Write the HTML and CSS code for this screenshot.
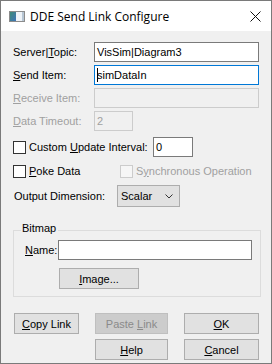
FILE: index.html
```html
<!DOCTYPE html>
<html lang="en">
<head>
  <meta charset="UTF-8">
  <title>DDE Send Link Configure</title>
  <link rel="stylesheet" href="styles.css">
</head>
<body>
  <div class="window">
    <div class="titlebar">
      <svg class="app-icon" width="16" height="11" viewBox="0 0 16 11">
        <defs>
          <linearGradient id="blk" x1="0" y1="0" x2="1" y2="1">
            <stop offset="0" stop-color="#3c8a78"/>
            <stop offset="1" stop-color="#3f74b8"/>
          </linearGradient>
        </defs>
        <rect x="0.5" y="0.5" width="15" height="10" fill="#d7dee4" stroke="#8c8c8c"/>
        <rect x="1" y="1" width="6" height="9" fill="url(#blk)"/>
        <rect x="7" y="1" width="6" height="9" fill="#eef3f8"/>
        <rect x="13" y="1" width="2" height="9" fill="#b7c6d4"/>
      </svg>
      <span class="title">DDE Send Link Configure</span>
      <svg class="close" width="11" height="11" viewBox="0 0 11 11">
        <path d="M0.5 0.5 L10.5 10.5 M10.5 0.5 L0.5 10.5" stroke="#111" stroke-width="1"/>
      </svg>
    </div>

    <div class="client">
      <div class="fields">
        <span class="lbl">Server|<u>T</u>opic:</span>
        <div class="edit">VisSim|Diagram3</div>

        <span class="lbl"><u>S</u>end Item:</span>
        <div class="edit focused"><span class="caret"></span>simDataIn</div>

        <span class="lbl off"><u>R</u>eceive Item:</span>
        <div class="edit disabled"></div>

        <span class="lbl off"><u>D</u>ata Timeout:</span>
        <div class="edit disabled short">2</div>
      </div>

      <div class="row row-update">
        <span class="check wide-check"><span class="box"></span><span>Custom <u>U</u>pdate Interval:</span></span>
        <div class="edit small">0</div>
      </div>

      <div class="row row-poke">
        <span class="check poke-check"><span class="box"></span><span><u>P</u>oke Data</span></span>
        <span class="check off"><span class="box"></span><span>S<u>y</u>nchronous Operation</span></span>
      </div>

      <div class="row row-output">
        <span class="out-lbl">Output Dimension:</span>
        <div class="combo">
          <span>Scalar</span>
          <svg width="8" height="5" viewBox="0 0 8 5"><path d="M0.5 0.5 L4 4 L7.5 0.5" fill="none" stroke="#333" stroke-width="1"/></svg>
        </div>
      </div>

      <fieldset class="group">
        <legend>Bitmap</legend>
        <div class="name-row">
          <span class="name-lbl"><u>N</u>ame:</span>
          <div class="edit name-edit"></div>
        </div>
        <div class="btn image-btn"><span><u>I</u>mage...</span></div>
      </fieldset>

      <div class="buttons">
        <div class="btn"><span><u>C</u>opy Link</span></div>
        <div class="btn disabled"><span>Paste <u>L</u>ink</span></div>
        <div class="btn"><span><u>O</u>K</span></div>
        <div></div>
        <div class="btn"><span><u>H</u>elp</span></div>
        <div class="btn"><span><u>C</u>ancel</span></div>
      </div>
    </div>
  </div>
</body>
</html>
```

FILE: styles.css
```css
body, html {
  margin: 0;
  padding: 0;
}
body {
  font-family: 'Liberation Sans', Arial, sans-serif;
  font-size: 11px;
  color: #000;
}
u {
  text-decoration-thickness: 1px;
  text-underline-offset: 1px;
}
.window {
  width: 272px;
  height: 364px;
  box-sizing: border-box;
  border: 1px solid #7a7a7a;
  background: #f0f0f0;
}
.titlebar {
  height: 30px;
  background: #fff;
  display: flex;
  align-items: center;
}
.app-icon {
  margin-left: 8px;
  margin-top: 1px;
}
.title {
  font-family: 'Open Sans', sans-serif;
  font-size: 12px;
  margin-left: 5px;
  flex: 1;
}
.close {
  margin-right: 10px;
}
.client {
  padding: 11px 0 0 12px;
}
.fields {
  display: grid;
  grid-template-columns: 81px 165px;
  grid-auto-rows: 20px;
  row-gap: 3px;
  align-items: center;
}
.lbl.off, .check.off {
  color: #a0a0a0;
}
.edit {
  height: 20px;
  box-sizing: border-box;
  border: 1px solid #7a7a7a;
  background: #fff;
  padding: 0 2px;
  line-height: 18px;
  white-space: nowrap;
  position: relative;
}
.edit.focused {
  border-color: #0078d7;
}
.edit.disabled {
  border-color: #cccccc;
  background: #f0f0f0;
  color: #a0a0a0;
}
.edit.short {
  width: 39px;
}
.caret {
  position: absolute;
  left: 2px;
  top: 2px;
  width: 1px;
  height: 14px;
  background: #000;
}
.row {
  display: flex;
  align-items: center;
  height: 20px;
}
.row-update {
  margin-top: 6px;
}
.row-poke {
  margin-top: 4px;
}
.row-output {
  margin-top: 4px;
  height: 22px;
}
.check {
  display: flex;
  align-items: center;
}
.check .box {
  width: 13px;
  height: 13px;
  box-sizing: border-box;
  border: 1px solid #333;
  background: #fff;
  margin-right: 3px;
}
.check.off .box {
  border-color: #cccccc;
  background: #f6f6f6;
}
.wide-check {
  width: 140px;
}
.poke-check {
  width: 107px;
}
.edit.small {
  width: 40px;
}
.out-lbl {
  width: 103px;
  padding-left: 1px;
}
.combo {
  width: 63px;
  height: 22px;
  box-sizing: border-box;
  border: 1px solid #adadad;
  background: #e1e1e1;
  display: flex;
  align-items: center;
  justify-content: space-between;
  padding: 0 6px 0 3px;
}
.group {
  width: 248px;
  box-sizing: border-box;
  margin: 15px 0 0 0;
  padding: 0 0 7px 11px;
  border: 1px solid #dcdcdc;
}
.group legend {
  padding: 0 2px 4px 1px;
  margin-left: -4px;
  line-height: 13px;
}
.name-row {
  display: flex;
  align-items: center;
  margin-top: 1px;
}
.name-lbl {
  width: 33px;
}
.name-edit {
  width: 194px;
}
.btn {
  height: 21px;
  box-sizing: border-box;
  border: 1px solid #adadad;
  background: #e1e1e1;
  display: flex;
  align-items: center;
  justify-content: center;
}
.btn.disabled {
  background: #cccccc;
  border-color: #bfbfbf;
  color: #8a8a8a;
}
.image-btn {
  width: 80px;
  margin: 8px 0 0 34px;
}
.buttons {
  display: grid;
  grid-template-columns: 65px 73px 75px;
  column-gap: 16px;
  row-gap: 5px;
  margin: 16px 0 0 1px;
}
```
